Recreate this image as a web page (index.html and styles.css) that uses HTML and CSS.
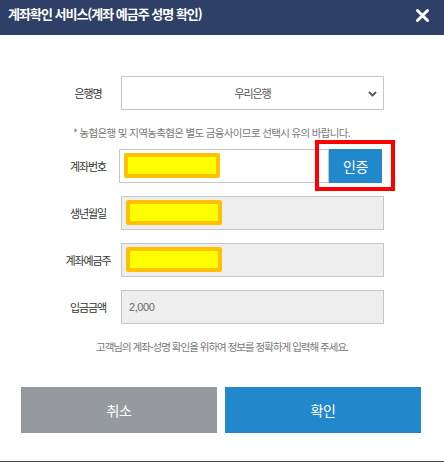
FILE: index.html
```html
<!DOCTYPE html>
<html lang="ko">
<head>
<meta charset="utf-8">
<title>계좌확인 서비스</title>
<link rel="stylesheet" href="styles.css">
</head>
<body>
<div class="modal">
  <div class="header">
    <div class="title">계좌확인 서비스(계좌 예금주 성명 확인)</div>
    <svg class="close" width="13" height="13" viewBox="0 0 13 13">
      <path d="M1.5 1.5 L11.5 11.5 M11.5 1.5 L1.5 11.5" stroke="#fff" stroke-width="3" stroke-linecap="round"/>
    </svg>
  </div>
  <div class="content">
    <div class="row">
      <div class="label">은행명</div>
      <div class="field select">
        <span class="select-text">우리은행</span>
        <svg class="chevron" width="9" height="6" viewBox="0 0 9 6">
          <path d="M1 1 L4.5 4.5 L8 1" stroke="#555" stroke-width="1.8" fill="none"/>
        </svg>
      </div>
    </div>
    <div class="notice top">* 농협은행 및 지역농축협은 별도 금융사이므로 선택시 유의 바랍니다.</div>
    <div class="rows">
      <div class="row">
        <div class="label">계좌번호</div>
        <div class="field account"><span class="mask"></span></div>
        <div class="auth-wrap">
          <div class="auth">인증</div>
          <div class="redbox"></div>
        </div>
      </div>
      <div class="row">
        <div class="label">생년월일</div>
        <div class="field readonly"><span class="mask"></span></div>
      </div>
      <div class="row">
        <div class="label">계좌예금주</div>
        <div class="field readonly"><span class="mask"></span></div>
      </div>
      <div class="row">
        <div class="label">입금금액</div>
        <div class="field readonly amount">2,000</div>
      </div>
    </div>
    <div class="notice bottom">고객님의 계좌-성명 확인을 위하여 정보를 정확하게 입력해 주세요.</div>
    <div class="buttons">
      <div class="btn cancel">취소</div>
      <div class="btn confirm">확인</div>
    </div>
  </div>
</div>
</body>
</html>
```

FILE: styles.css
```css
* { box-sizing: border-box; }
html, body {
  margin: 0;
  padding: 0;
  background: #fff;
}
body {
  width: 444px;
  height: 462px;
  overflow: hidden;
  font-family: "Noto Sans CJK KR", "Noto Sans", sans-serif;
  color: #333;
}
.modal {
  height: 462px;
  border-bottom: 1px solid #444;
  display: flex;
  flex-direction: column;
}
.header {
  height: 35px;
  flex: none;
  background: #2e4068;
  display: flex;
  justify-content: space-between;
  align-items: flex-start;
  padding: 5px 15px 0 8px;
}
.title {
  color: #fff;
  font-size: 13px;
  font-weight: 700;
  letter-spacing: -1px;
  line-height: 18px;
}
.close {
  margin-top: 4px;
}
.content {
  padding-top: 41px;
}
.rows {
  display: flex;
  flex-direction: column;
  gap: 13px;
}
.row {
  display: flex;
  align-items: center;
  height: 34px;
  padding-left: 55px;
}
.label {
  width: 66px;
  flex: none;
  text-align: center;
  font-size: 11px;
  letter-spacing: -1.1px;
  color: #333;
}
.field {
  width: 263px;
  height: 34px;
  flex: none;
  border: 1px solid #c6c6c6;
  background: #fff;
  padding: 3px 0 0 4px;
}
.field.readonly {
  background: #eeeeee;
}
.field.account {
  width: 210px;
  margin-left: -2px;
}
.select {
  display: flex;
  align-items: center;
  justify-content: center;
  position: relative;
  padding: 0;
}
.select-text {
  font-size: 11px;
  letter-spacing: -1.1px;
  color: #555;
}
.chevron {
  position: absolute;
  right: 6px;
  top: 14px;
}
.mask {
  display: block;
  width: 96px;
  height: 25px;
  background: #ffff00;
  border: 4px solid #ffc000;
  border-radius: 2px;
}
.amount {
  display: flex;
  align-items: center;
  padding: 0 0 0 7px;
  font-family: "Liberation Sans", sans-serif;
  font-size: 11px;
  letter-spacing: -0.4px;
  color: #666;
}
.auth-wrap {
  position: relative;
  width: 53px;
  height: 34px;
  flex: none;
}
.auth {
  width: 53px;
  height: 34px;
  background: #2288cc;
  color: #fff;
  font-size: 14px;
  letter-spacing: -0.5px;
  display: flex;
  align-items: center;
  justify-content: center;
}
.redbox {
  position: absolute;
  top: -9px;
  left: -14px;
  right: -13px;
  bottom: -8px;
  border: 4px solid #ff0000;
}
.notice {
  font-size: 10.5px;
  color: #777;
  line-height: 14px;
  text-align: center;
}
.notice.top {
  margin: 16px 0 9px;
  text-align: left;
  padding-left: 73px;
  letter-spacing: -0.65px;
}
.notice.bottom {
  margin-top: 16px;
  letter-spacing: -1px;
}
.buttons {
  display: flex;
  gap: 8px;
  padding: 0 23px 0 21px;
  margin-top: 33px;
}
.btn {
  width: 196px;
  height: 46px;
  color: #fff;
  font-size: 14px;
  letter-spacing: -0.5px;
  display: flex;
  align-items: center;
  justify-content: center;
}
.cancel { background: #969a9e; }
.confirm { background: #2288cc; }
```
